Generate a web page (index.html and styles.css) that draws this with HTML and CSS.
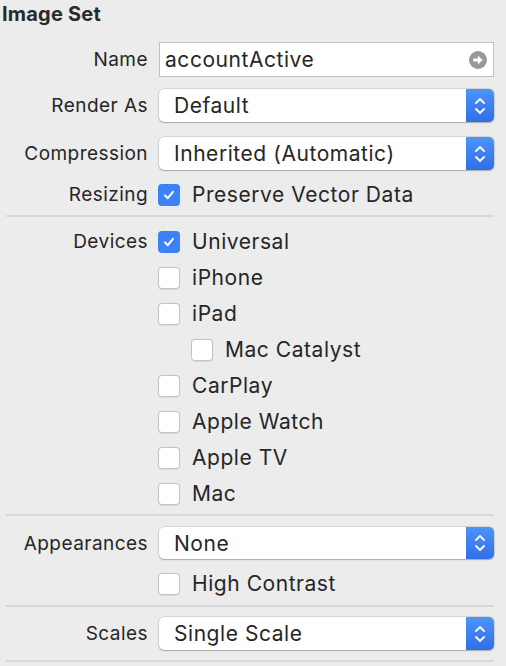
FILE: index.html
```html
<!DOCTYPE html>
<html>
<head>
<meta charset="utf-8">
<link rel="stylesheet" href="styles.css">
</head>
<body>
<div class="panel">
  <h1 class="title">Image Set</h1>

  <div class="row r-name">
    <span class="label">Name</span>
    <div class="field">
      <span class="field-text">accountActive</span>
      <svg class="go" width="18" height="18" viewBox="0 0 17 17"><circle cx="8.5" cy="8.5" r="8.5" fill="#999"/><path d="M4 7.1h4.4V4.3l4.5 4.2-4.5 4.2V9.9H4z" fill="#fff"/></svg>
    </div>
  </div>

  <div class="row r-render">
    <span class="label">Render As</span>
    <div class="popup"><span class="popup-text">Default</span><span class="stepper"><svg width="12" height="22" viewBox="0 0 12 22"><path d="M2 8 6 4 10 8M2 14 6 18 10 14" fill="none" stroke="#fff" stroke-width="1.8" stroke-linecap="round" stroke-linejoin="round"/></svg></span></div>
  </div>

  <div class="row r-comp">
    <span class="label">Compression</span>
    <div class="popup"><span class="popup-text">Inherited (Automatic)</span><span class="stepper"><svg width="12" height="22" viewBox="0 0 12 22"><path d="M2 8 6 4 10 8M2 14 6 18 10 14" fill="none" stroke="#fff" stroke-width="1.8" stroke-linecap="round" stroke-linejoin="round"/></svg></span></div>
  </div>

  <div class="row r-check r-resize">
    <span class="label">Resizing</span>
    <div class="check-item"><span class="box on"><svg width="14" height="14" viewBox="0 0 14 14"><path d="M3 7.4 5.8 10.2 11 3.8" fill="none" stroke="#fff" stroke-width="2" stroke-linecap="round" stroke-linejoin="round"/></svg></span><span class="check-text">Preserve Vector Data</span></div>
  </div>

  <div class="sep s1"></div>

  <div class="row r-check r-first">
    <span class="label">Devices</span>
    <div class="check-item"><span class="box on"><svg width="14" height="14" viewBox="0 0 14 14"><path d="M3 7.4 5.8 10.2 11 3.8" fill="none" stroke="#fff" stroke-width="2" stroke-linecap="round" stroke-linejoin="round"/></svg></span><span class="check-text">Universal</span></div>
  </div>
  <div class="row r-check"><span class="label"></span><div class="check-item"><span class="box"></span><span class="check-text">iPhone</span></div></div>
  <div class="row r-check"><span class="label"></span><div class="check-item"><span class="box"></span><span class="check-text">iPad</span></div></div>
  <div class="row r-check"><span class="label"></span><div class="check-item indent"><span class="box"></span><span class="check-text">Mac Catalyst</span></div></div>
  <div class="row r-check"><span class="label"></span><div class="check-item"><span class="box"></span><span class="check-text">CarPlay</span></div></div>
  <div class="row r-check"><span class="label"></span><div class="check-item"><span class="box"></span><span class="check-text">Apple Watch</span></div></div>
  <div class="row r-check"><span class="label"></span><div class="check-item"><span class="box"></span><span class="check-text">Apple TV</span></div></div>
  <div class="row r-check"><span class="label"></span><div class="check-item"><span class="box"></span><span class="check-text">Mac</span></div></div>

  <div class="sep s2"></div>

  <div class="row r-appear">
    <span class="label">Appearances</span>
    <div class="popup"><span class="popup-text">None</span><span class="stepper"><svg width="12" height="22" viewBox="0 0 12 22"><path d="M2 8 6 4 10 8M2 14 6 18 10 14" fill="none" stroke="#fff" stroke-width="1.8" stroke-linecap="round" stroke-linejoin="round"/></svg></span></div>
  </div>
  <div class="row r-check r-contrast"><span class="label"></span><div class="check-item"><span class="box"></span><span class="check-text">High Contrast</span></div></div>

  <div class="sep s3"></div>

  <div class="row r-scales">
    <span class="label">Scales</span>
    <div class="popup"><span class="popup-text">Single Scale</span><span class="stepper"><svg width="12" height="22" viewBox="0 0 12 22"><path d="M2 8 6 4 10 8M2 14 6 18 10 14" fill="none" stroke="#fff" stroke-width="1.8" stroke-linecap="round" stroke-linejoin="round"/></svg></span></div>
  </div>

  <div class="sep s4"></div>
</div>
</body>
</html>
```

FILE: styles.css
```css
* { box-sizing: border-box; }
html, body {
  margin: 0;
  padding: 0;
  background: #ececec;
}
body {
  width: 506px;
  height: 666px;
  overflow: hidden;
  font-family: "Inter", "Liberation Sans", sans-serif;
  color: #262626;
}
.panel {
  display: flex;
  flex-direction: column;
  padding: 0 12px 0 0;
}
.title {
  margin: 0;
  height: 28px;
  line-height: 28px;
  font-size: 20px;
  font-weight: 700;
  padding-left: 2px;
  color: #2a2a2a;
  letter-spacing: 0.2px;
}
.row {
  display: grid;
  grid-template-columns: 148px 1fr;
  column-gap: 11px;
  align-items: center;
}
.label {
  text-align: right;
  font-size: 19px;
  letter-spacing: 0.45px;
}
.r-name { margin-top: 14px; height: 35px; }
.r-render { margin-top: 12px; height: 33px; }
.r-comp { margin-top: 15px; height: 33px; }
.r-check { height: 22px; margin-top: 14px; }
.r-resize { margin-top: 12px; }
.r-first { margin-top: 12px; }
.r-appear { margin-top: 11px; height: 32px; }
.r-contrast { margin-top: 12px; }
.r-scales { margin-top: 10px; height: 33px; }

.field {
  height: 35px;
  background: #fff;
  border: 1px solid #c2c2c2;
  display: flex;
  align-items: center;
  justify-content: space-between;
  padding: 0 6px 0 5px;
}
.field-text, .popup-text, .check-text {
  font-size: 21px;
  letter-spacing: 0.55px;
}
.go { display: block; }

.popup {
  height: 100%;
  background: #fff;
  border-radius: 5px;
  box-shadow: 0 0 0 0.5px rgba(0,0,0,0.18), 0 1px 1.5px rgba(0,0,0,0.22);
  display: flex;
  align-items: center;
  justify-content: space-between;
}
.popup-text {
  padding-left: 15px;
}
.stepper {
  width: 28px;
  height: 100%;
  border-radius: 0 5px 5px 0;
  background: linear-gradient(#4b94f8, #2f6fe8);
  display: flex;
  align-items: center;
  justify-content: center;
}
.stepper svg { display: block; }

.check-item {
  display: flex;
  align-items: center;
  gap: 12px;
  margin-left: -1px;
}
.check-item.indent { margin-left: 32px; }
.box {
  width: 22px;
  height: 22px;
  border-radius: 4px;
  background: #fff;
  box-shadow: inset 0 0 0 1px #c3c3c3, 0 0.5px 1px rgba(0,0,0,0.08);
  display: flex;
  align-items: center;
  justify-content: center;
  flex: none;
}
.box.on {
  background: #3b82f6;
  box-shadow: none;
}
.box svg { display: block; }

.sep {
  height: 2px;
  background: #d8d8d8;
  margin-left: 6px;
}
.s1 { margin-top: 11px; }
.s2 { margin-top: 11px; }
.s3 { margin-top: 12px; }
.s4 { margin-top: 10px; }
```
